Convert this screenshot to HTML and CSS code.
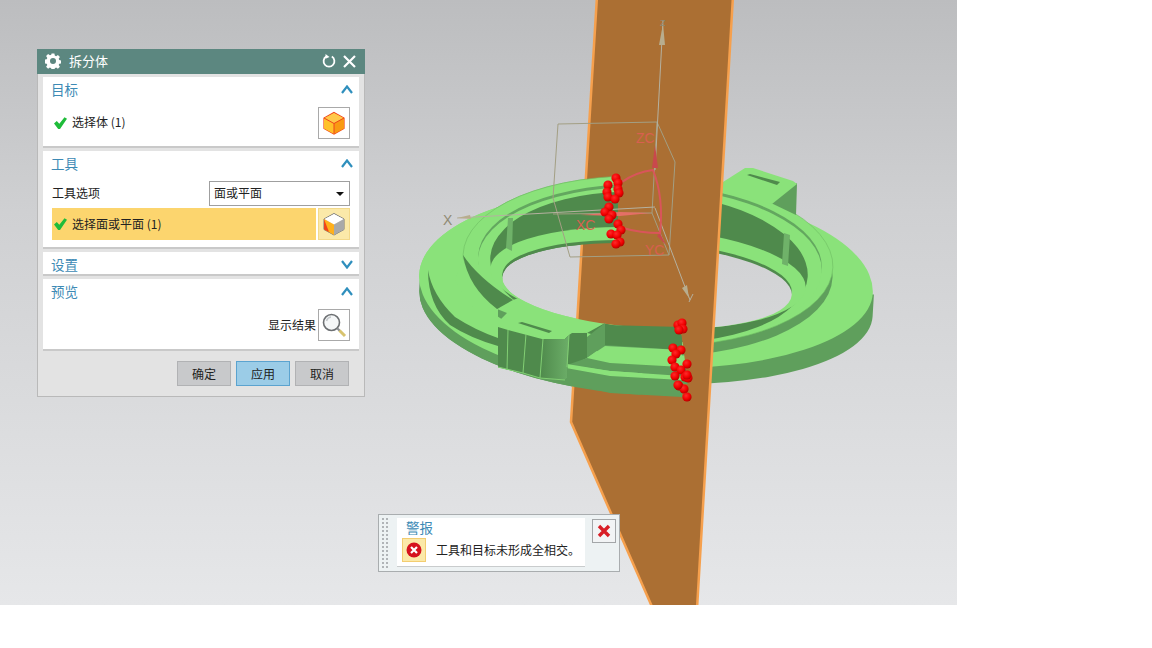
FILE: index.html
```html
<!DOCTYPE html>
<html lang="zh">
<head>
<meta charset="utf-8">
<title>拆分体</title>
<link rel="stylesheet" href="styles.css">
</head>
<body>
<main class="screen">
  <svg class="scene" width="957" height="605" viewBox="0 0 957 605" aria-hidden="true">
    <defs>
      <radialGradient id="ball" cx="0.4" cy="0.35" r="0.7">
        <stop offset="0" stop-color="#ff2a2a"/><stop offset="0.6" stop-color="#f00000"/><stop offset="1" stop-color="#a80000"/>
      </radialGradient>
      <linearGradient id="clasp" x1="0" y1="0" x2="1" y2="0">
        <stop offset="0" stop-color="#4f8a4c"/><stop offset="1" stop-color="#6cae68"/>
      </linearGradient>
      <mask id="holeMask" maskUnits="userSpaceOnUse" x="0" y="0" width="957" height="605">
        <rect width="957" height="605" fill="#fff"/>
        <ellipse cx="647" cy="286" rx="145" ry="42" transform="rotate(3.6 647 286)" fill="#000"/>
      </mask>
      <clipPath id="frontClip">
        <path d="M400 100H618L618 248L650 300L678 318L683 345L690 402L400 460Z"/>
      </clipPath>
      <g id="ring">
        <g mask="url(#holeMask)">
          <path class="g-wall" transform="rotate(3.4 646 303)" d="M419 288V303A227 92 0 0 0 646 395L646 383A227 80 0 0 0 873 303V281Z"/>
          <path class="g-top" transform="rotate(2.3 646 284)" d="M419 284A227 95 0 0 1 873 284A227 84 0 0 1 646 368L646 384A227 100 0 0 1 419 284Z"/>
          <g transform="rotate(2 648 261)">
            <ellipse class="g-wall" cx="648" cy="271" rx="185" ry="85"/>
            <ellipse class="g-top g-edge" cx="648" cy="261" rx="185" ry="85"/>
            <ellipse class="g-mid" cx="650" cy="262" rx="172" ry="78"/>
            <ellipse class="g-top" cx="650" cy="265" rx="172" ry="78"/>
          </g>
          <ellipse class="g-dark" cx="649" cy="267" rx="159" ry="75" transform="rotate(3.6 649 267)"/>
          <ellipse class="g-top" cx="648" cy="278" rx="158" ry="50" transform="rotate(3.6 648 278)"/>
          <ellipse class="g-dark" cx="647" cy="283" rx="145" ry="42" transform="rotate(3.6 647 283)"/>
          <!-- front band with the clasp head -->
          <path class="g-top" d="M497 309L513 300L540 290L680 310L682 327L620 327L605 323L587 333L572 332L565 339L542 339L508 330L501 326L501 319L507 313Z"/>
          <!-- left crescents -->
          <path class="g-top" d="M463 258Q470 285 498 309V330Q470 310 455 280Z"/>
          <path class="g-dark" d="M463 255Q478 278 513 300L497 309Q468 287 463 255Z"/>
          <path class="g-dark" d="M428 270Q432 295 455 317Q475 330 498 338V346Q470 338 450 325Q428 305 428 270Z"/>
        </g>
        <!-- back tab -->
        <path class="g-wall" d="M797 183L796 215L771 203Z"/>
        <path class="g-top" d="M723 182L745 168L753 168L793 181L797 184L772 204L723 193Z"/>
        <path class="g-dark" d="M747 175L750 174L780 182L777 185Z"/>
        <path class="g-rib" d="M508 218L513 218L512 251L506 248Z"/>
        <path class="g-rib" d="M784 233L790 235L788 266L782 264Z"/>
        <!-- front notch -->
        <path class="g-dark" d="M605 325L682 327L682 350L605 345Z"/>
        <path class="g-wall" d="M587 337L605 323V345L587 358Z"/>
        <path class="g-dark" d="M572 333H587V358L567 368L569 335Z"/>
        <path class="g-top" d="M587 358L605 346L682 350V367L610 363Z"/>
        <path class="g-wall" d="M587 358L610 363L682 367V376L610 371L567 365Z"/>
        <path class="g-top" d="M567 364L610 371L682 376V381L610 377L567 369Z"/>
        <path class="g-wall" d="M566 368L610 376L682 380V397L610 393L566 383Z"/>
        <!-- clasp -->
        <path class="g-dark" d="M498 327L508 330L542 339L565 339L569 335L567 378L565 380L540 378L523 373L498 367Z"/>
        <path fill="url(#clasp)" d="M542 339L565 339L569 335L567 378L565 380L540 378Z"/>
        <path class="g-line" d="M508 330L507 370M526 334L523 373M543 339L540 378M569 335L567 367M498 367L523 373L540 378L565 380"/>
        <path class="g-dark" d="M518 323L522 322L552 331L549 333Z"/>
      </g>
    </defs>

    <use href="#ring"/>
    <path class="plate" d="M597 -4L733 -4L697 609L653 609L571 422Z"/>
    <use href="#ring" clip-path="url(#frontClip)"/>

    <!-- view triad and bounding box -->
    <path class="box" d="M558 124L657 122L675 162L669 255L570 257L553 198ZM657 122L652 213L669 255M553 214L652 213"/>
    <path class="axis" d="M457 218L655 207M655 170L663 20M655 208L690 300M689 302L693 294"/>
    <path class="axis-head" d="M457 218L470 215L471 219Z"/>
    <path class="axis-head" d="M663 24L659 45L665 45Z"/>
    <path class="axis-head" d="M689 298L682 288L687 285Z"/>
    <path class="wcs-cone" d="M655 145L658 168L652 168Z"/>
    <path class="wcs-cone" d="M660 233L666 245L657 236Z"/>
    <path class="wcs-x" d="M580 215L620 212L651 213L620 216Z"/>
    <path class="wcs" d="M622 182Q636 172 653 170Q664 198 660 233Q640 233 623 228"/>
    <text class="label label-x" x="443" y="225">X</text>
    <text class="label label-z" x="660" y="26">Z</text>
    <text class="label wcs-label" x="636" y="143">ZC</text>
    <text class="label wcs-label" x="576" y="230">XC</text>
    <text class="label wcs-label" x="645" y="255">YC</text>

    <g class="balls">
      <circle cx="616" cy="178" r="4.6"/><circle cx="608" cy="185" r="4.6"/><circle cx="618" cy="183" r="4.6"/><circle cx="618" cy="189" r="4.6"/><circle cx="607" cy="192" r="4.6"/><circle cx="619" cy="193" r="4.6"/><circle cx="608" cy="197" r="4.6"/><circle cx="615" cy="199" r="4.6"/><circle cx="609" cy="207" r="4.6"/><circle cx="605" cy="212" r="4.6"/><circle cx="612" cy="215" r="4.6"/><circle cx="609" cy="219" r="4.6"/><circle cx="618" cy="224" r="4.6"/><circle cx="621" cy="230" r="4.6"/><circle cx="611" cy="234" r="4.6"/><circle cx="617" cy="235" r="4.6"/><circle cx="620" cy="242" r="4.6"/><circle cx="616" cy="244" r="4.6"/>
      <circle cx="678" cy="325" r="4.6"/><circle cx="682" cy="323" r="4.6"/><circle cx="683" cy="329" r="4.6"/><circle cx="679" cy="330" r="4.6"/><circle cx="673" cy="348" r="4.6"/><circle cx="681" cy="350" r="4.6"/><circle cx="676" cy="354" r="4.6"/><circle cx="672" cy="360" r="4.6"/><circle cx="687" cy="364" r="4.6"/><circle cx="675" cy="367" r="4.6"/><circle cx="681" cy="370" r="4.6"/><circle cx="675" cy="376" r="4.6"/><circle cx="685" cy="377" r="4.6"/><circle cx="688" cy="378" r="4.6"/><circle cx="687" cy="375" r="4.6"/><circle cx="679" cy="386" r="4.6"/><circle cx="684" cy="389" r="4.6"/><circle cx="687" cy="397" r="4.6"/><circle cx="678" cy="385" r="4.6"/>
    </g>
  </svg>

  <section class="dialog">
    <header class="titlebar">
      <svg class="gear" width="16" height="16" viewBox="0 0 16 16"><path d="M6.6 0.5h2.8l.4 2.1 1.3.6 1.8-1.2 2 2-1.2 1.8.6 1.3 2.1.4v2.8l-2.1.4-.6 1.3 1.2 1.8-2 2-1.8-1.2-1.3.6-.4 2.1H6.6l-.4-2.1-1.3-.6-1.8 1.2-2-2 1.2-1.8-.6-1.3-2.1-.4V6.600l2.1-.4.6-1.300-1.200-1.800 2-2 1.800 1.200 1.300-.6ZM8 5a3 3 0 1 0 0 6 3 3 0 0 0 0-6Z" fill="#fff" fill-rule="evenodd"/></svg>
      <h1 class="title">拆分体</h1>
      <svg class="tool" width="14" height="14" viewBox="0 0 14 14"><path d="M4.200 2.600A5.400 5.400 0 1 0 9.800 2.600" fill="none" stroke="#fff" stroke-width="1.800"/><path d="M3.500 0V4.800L7.500 3Z" fill="#fff"/></svg>
      <svg class="tool" width="13" height="13" viewBox="0 0 13 13"><path d="M1 1L12 12M12 1L1 12" stroke="#fff" stroke-width="2.200"/></svg>
    </header>
    <div class="panels">
      <section class="panel">
        <div class="panel-head"><span class="panel-title">目标</span><svg class="chev" width="12" height="9" viewBox="0 0 12 9"><path d="M1 8L6 1.500L11 8"/></svg></div>
        <div class="row row-sel">
          <svg class="check" width="13" height="12" viewBox="0 0 13 12"><path d="M0 6.500L2.800 4L5.300 6.800L10.500 0.200L13 1.800L6 12H4.200Z"/></svg>
          <span class="row-label">选择体 (1)</span>
          <span class="icon-btn">
            <svg width="24" height="24" viewBox="0 0 24 24"><path d="M12 1.500L22 7V17.500L12 23L2 17.500V7Z" fill="#ffb01c" stroke="#f0441c" stroke-width="1.200"/><path d="M12 2L21.500 7L12 12.500L2.500 7Z" fill="#ffc94a"/><path d="M2 7L12 12.500V23L2 17.500Z" fill="#ffc12a"/><path d="M22 7L12 12.500V23L22 17.500Z" fill="#f99a12"/><path d="M2 7L12 12.500L22 7M12 12.500V23" fill="none" stroke="#f0441c" stroke-width="1"/></svg>
          </span>
        </div>
      </section>
      <section class="panel">
        <div class="panel-head"><span class="panel-title">工具</span><svg class="chev" width="12" height="9" viewBox="0 0 12 9"><path d="M1 8L6 1.500L11 8"/></svg></div>
        <div class="row row-option">
          <span class="option-label">工具选项</span>
          <div class="select"><span>面或平面</span><i class="caret"></i></div>
        </div>
        <div class="row row-active">
          <div class="active-label">
            <svg class="check" width="13" height="12" viewBox="0 0 13 12"><path d="M0 6.500L2.800 4L5.300 6.800L10.500 0.200L13 1.800L6 12H4.200Z"/></svg>
            <span class="row-label">选择面或平面 (1)</span>
          </div>
          <span class="icon-btn icon-btn-active">
            <svg width="24" height="24" viewBox="0 0 24 24"><path d="M12 1.500L22 7V17.500L12 23L2 17.500V7Z" fill="#ddd" stroke="#777" stroke-width="1"/><path d="M12 2L21.500 7L12 12.500L2.500 7Z" fill="#fff"/><path d="M2 7L12 12.500V23L2 17.500Z" fill="#ffb01c"/><path d="M2 7L2 17.500L7 20Z" fill="#f0441c"/><path d="M22 7L12 12.500V23L22 17.500Z" fill="#a9a9a9"/></svg>
          </span>
        </div>
      </section>
      <section class="panel panel-closed">
        <div class="panel-head"><span class="panel-title">设置</span><svg class="chev" width="12" height="9" viewBox="0 0 12 9"><path d="M1 1L6 7.500L11 1"/></svg></div>
      </section>
      <section class="panel">
        <div class="panel-head"><span class="panel-title">预览</span><svg class="chev" width="12" height="9" viewBox="0 0 12 9"><path d="M1 8L6 1.500L11 8"/></svg></div>
        <div class="row row-preview">
          <span class="option-label">显示结果</span>
          <span class="icon-btn">
            <svg width="26" height="26" viewBox="0 0 26 26"><circle cx="10.500" cy="10.500" r="8" fill="#f5f7f8" stroke="#6d7073" stroke-width="1.600"/><path d="M5.500 9A5.500 5.500 0 0 1 10 5" fill="none" stroke="#c4c8cb" stroke-width="1.500"/><path d="M16.500 16.500L19 19" stroke="#8a8d90" stroke-width="2.200"/><path d="M18.500 18.500L24 24" stroke="#d8c36e" stroke-width="3"/></svg>
          </span>
        </div>
      </section>
    </div>
    <footer class="actions">
      <button class="btn" type="button">确定</button>
      <button class="btn btn-primary" type="button">应用</button>
      <button class="btn" type="button">取消</button>
    </footer>
  </section>

  <aside class="alert">
    <div class="grip"></div>
    <div class="alert-card">
      <div class="alert-title">警报</div>
      <div class="alert-body">
        <span class="alert-icon">
          <svg width="16" height="16" viewBox="0 0 16 16"><circle cx="8" cy="8" r="7.500" fill="#d5121e"/><path d="M5 5L11 11M11 5L5 11" stroke="#fff" stroke-width="2.200"/></svg>
        </span>
        <span class="alert-text">工具和目标未形成全相交。</span>
      </div>
    </div>
    <button class="alert-close" type="button" aria-label="关闭">
      <svg width="14" height="14" viewBox="0 0 14 14"><path d="M2 2L12 12M12 2L2 12" stroke="#d81e26" stroke-width="3.400"/></svg>
    </button>
  </aside>
</main>
</body>
</html>
```

FILE: styles.css
```css
* { box-sizing: border-box; }
html, body { margin: 0; padding: 0; background: #fff; }
body { font-family: "Noto Sans CJK SC", "Liberation Sans", sans-serif; font-size: 12px; color: #222; width: 1152px; height: 648px; overflow: hidden; }

.screen { position: relative; width: 957px; height: 605px; overflow: hidden; background: linear-gradient(180deg, #bcbdbf 0%, #cfd0d2 35%, #e6e7e9 100%); }
.scene { position: absolute; left: 0; top: 0; display: block; }

.g-top { fill: #8ae27a; }
.g-edge { stroke: #6fbd63; stroke-width: 0.6; }
.g-wall { fill: #5f9f5c; }
.g-mid { fill: #63a75f; }
.g-dark { fill: #4f8a4c; }
.g-rib { fill: #6fb269; }
.g-line { fill: none; stroke: #82cf74; stroke-width: 1; }
.plate { fill: #ab6f33; stroke: #f6a04d; stroke-width: 2.500; }
.box { fill: none; stroke: #a39f84; stroke-width: 1; }
.axis { fill: none; stroke: #b5b1a0; stroke-width: 1; }
.axis-head { fill: #b8ad8e; }
.wcs { fill: none; stroke: #d9555a; stroke-width: 2; }
.wcs-cone { fill: #c9484c; }
.wcs-x { fill: #e56f66; }
.label { font-family: "Liberation Sans", sans-serif; font-size: 14px; }
.label-x { fill: #8f8a74; }
.label-z { fill: #8f8a74; font-size: 9px; }
.wcs-label { fill: #d8604f; font-size: 14px; }
.balls circle { fill: url(#ball); }

.dialog { position: absolute; left: 37px; top: 49px; width: 328px; height: 348px; display: flex; flex-direction: column; background: #e3e3e3; border: 1px solid #b9b9b9; border-top: 0; }
.titlebar { height: 25px; flex: none; margin: 0 -1px; display: flex; align-items: center; background: #5c8780; color: #fff; padding: 0 9px 1px 8px; }
.gear { flex: none; }
.title { flex: 1; margin: 0 0 0 8px; font-size: 13px; font-weight: 400; line-height: 24px; }
.tool { flex: none; margin-left: 7px; }
.panels { display: flex; flex-direction: column; gap: 3px; padding: 3px 5px 0; }
.panel { background: #fff; border-bottom: 2px solid #c9c9c9; padding: 0 9px; }
.panel-head { height: 26px; display: flex; align-items: center; justify-content: space-between; padding-bottom: 2px; margin-left: -1px; }
.panel-closed { height: 24px; }
.panel-title { font-size: 13.500px; color: #3d8ab5; line-height: 22px; }
.chev { flex: none; margin-right: -3px; }
.chev path { fill: none; stroke: #2f8fbd; stroke-width: 2.200; }
.row { display: flex; align-items: center; }
.row-sel { height: 32px; margin: 4px 0 7px; padding-left: 2px; }
.row-sel .row-label { flex: 1; padding-bottom: 4px; }
.check { flex: none; }
.check path { fill: #1fbc3a; }
.row-label { margin-left: 5px; font-size: 12px; padding-bottom: 2px; }
.icon-btn { width: 32px; height: 32px; flex: none; display: flex; align-items: center; justify-content: center; border: 1px solid #a9a9a9; background: #fff; }
.icon-btn-active { background: #fbe9a9; border-color: #f3d98a; }
.row-option { height: 25px; margin-top: 4px; justify-content: space-between; }
.row-option .option-label { padding-bottom: 2px; }
.option-label { font-size: 12px; line-height: 16px; }
.select { width: 141px; height: 25px; border: 1px solid #9f9f9f; display: flex; align-items: center; justify-content: space-between; padding: 0 5px 2px 4px; background: #fff; }
.caret { width: 0; height: 0; margin-top: 2px; border: 4px solid transparent; border-top: 4px solid #111; border-bottom: 0; }
.row-active { margin: 2px 0 7px; height: 32px; gap: 2px; }
.active-label { flex: 1; height: 32px; display: flex; align-items: center; background: #fcd56e; padding-left: 2px; }
.row-preview { justify-content: flex-end; gap: 2px; height: 32px; margin: 4px 0 8px; }
.actions { display: flex; justify-content: flex-end; gap: 5px; padding: 10px 15px 0 0; }
.btn { width: 54px; height: 25px; padding: 0; border: 1px solid #b1b2b4; background: #c8c9cb; font: inherit; font-size: 12px; color: #222; }
.btn-primary { background: #9bcce7; border-color: #5ba3cf; }

.alert { position: absolute; left: 378px; top: 514px; width: 242px; height: 58px; display: flex; background: #edf2f3; border: 1px solid #a9adaf; }
.grip { width: 8px; margin: 2px 0 2px 2px; flex: none; background-image: radial-gradient(circle, #b0b4b7 1.200px, transparent 1.500px); background-size: 4px 4px; }
.alert-card { width: 188px; height: 49px; margin: 3px 0 0 8px; flex: none; background: #fff; border-bottom: 1px solid #c9cccd; padding: 1px 0 0 5px; }
.alert-title { font-size: 13.500px; color: #3d8ab5; line-height: 17px; padding-left: 4px; }
.alert-body { display: flex; align-items: center; margin-top: 2px; }
.alert-icon { width: 24px; height: 24px; flex: none; display: flex; align-items: center; justify-content: center; background: #fbe9a9; border: 1px solid #f3cd70; }
.alert-text { margin-left: 10px; font-size: 12px; white-space: nowrap; padding-bottom: 2px; }
.alert-close { width: 24px; height: 24px; flex: none; margin: 4px 0 0 7px; padding: 0; border: 1px solid #a3a6a8; background: #f2f4f5; display: flex; align-items: center; justify-content: center; }
```
